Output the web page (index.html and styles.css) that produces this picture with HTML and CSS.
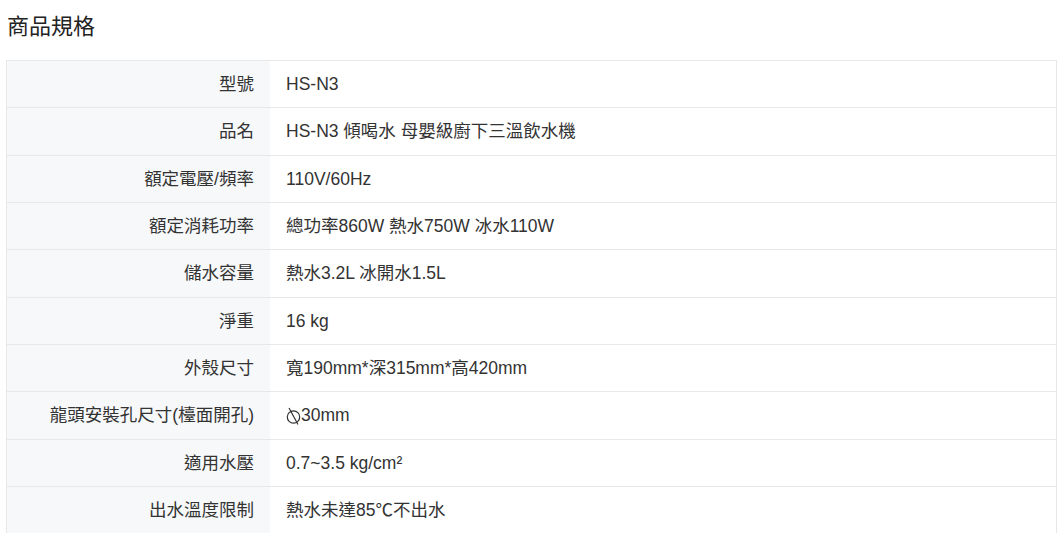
FILE: index.html
```html
<!DOCTYPE html>
<html lang="zh-Hant">
<head>
    <meta charset="UTF-8">
    <title>商品規格</title>
    <link rel="stylesheet" href="styles.css">
</head>
<body>
<section class="spec">
    <h2 class="spec-title">商品規格</h2>
    <table class="spec-table">
        <tr><th>型號</th><td>HS-N3</td></tr>
        <tr><th>品名</th><td>HS-N3 傾喝水 母嬰級廚下三溫飲水機</td></tr>
        <tr><th>額定電壓/頻率</th><td>110V/60Hz</td></tr>
        <tr><th>額定消耗功率</th><td>總功率860W 熱水750W 冰水110W</td></tr>
        <tr><th>儲水容量</th><td>熱水3.2L 冰開水1.5L</td></tr>
        <tr><th>淨重</th><td>16 kg</td></tr>
        <tr><th>外殼尺寸</th><td>寬190mm*深315mm*高420mm</td></tr>
        <tr><th>龍頭安裝孔尺寸(檯面開孔)</th><td><svg class="dia" width="15" height="19" viewBox="0 0 15 19"><circle cx="7.5" cy="11" r="6.2" fill="none" stroke="#333" stroke-width="1.2"/><line x1="3" y1="2" x2="12" y2="18.5" stroke="#333" stroke-width="1.2"/></svg>30mm</td></tr>
        <tr><th>適用水壓</th><td>0.7~3.5 kg/cm²</td></tr>
        <tr><th>出水溫度限制</th><td>熱水未達85℃不出水</td></tr>
    </table>
</section>
</body>
</html>
```

FILE: styles.css
```css
body {
    margin: 0;
    padding: 0;
    background-color: #fff;
    color: #333;
    font-family: "Liberation Sans", Arial, "Noto Sans CJK TC", sans-serif;
}

.spec {
    padding: 0 4px 0 6px;
}

.spec-title {
    margin: 0;
    padding: 8px 0 0 1px;
    height: 60px;
    box-sizing: border-box;
    font-size: 22px;
    font-weight: normal;
    color: #222;
}

.spec-table {
    width: 100%;
    border-collapse: collapse;
    border: 1px solid #e8e8e8;
    font-size: 17.5px;
}

.spec-table th,
.spec-table td {
    padding: 12px 16px;
    line-height: 22.33px;
    border-bottom: 1px solid #e8e8e8;
    vertical-align: middle;
}

.spec-table th {
    width: 231px;
    text-align: right;
    font-weight: normal;
    background-color: #f7f8fa;
    color: #333;
    white-space: nowrap;
}

.spec-table td {
    text-align: left;
    background-color: #fff;
}

.dia {
    vertical-align: -4px;
}
```
